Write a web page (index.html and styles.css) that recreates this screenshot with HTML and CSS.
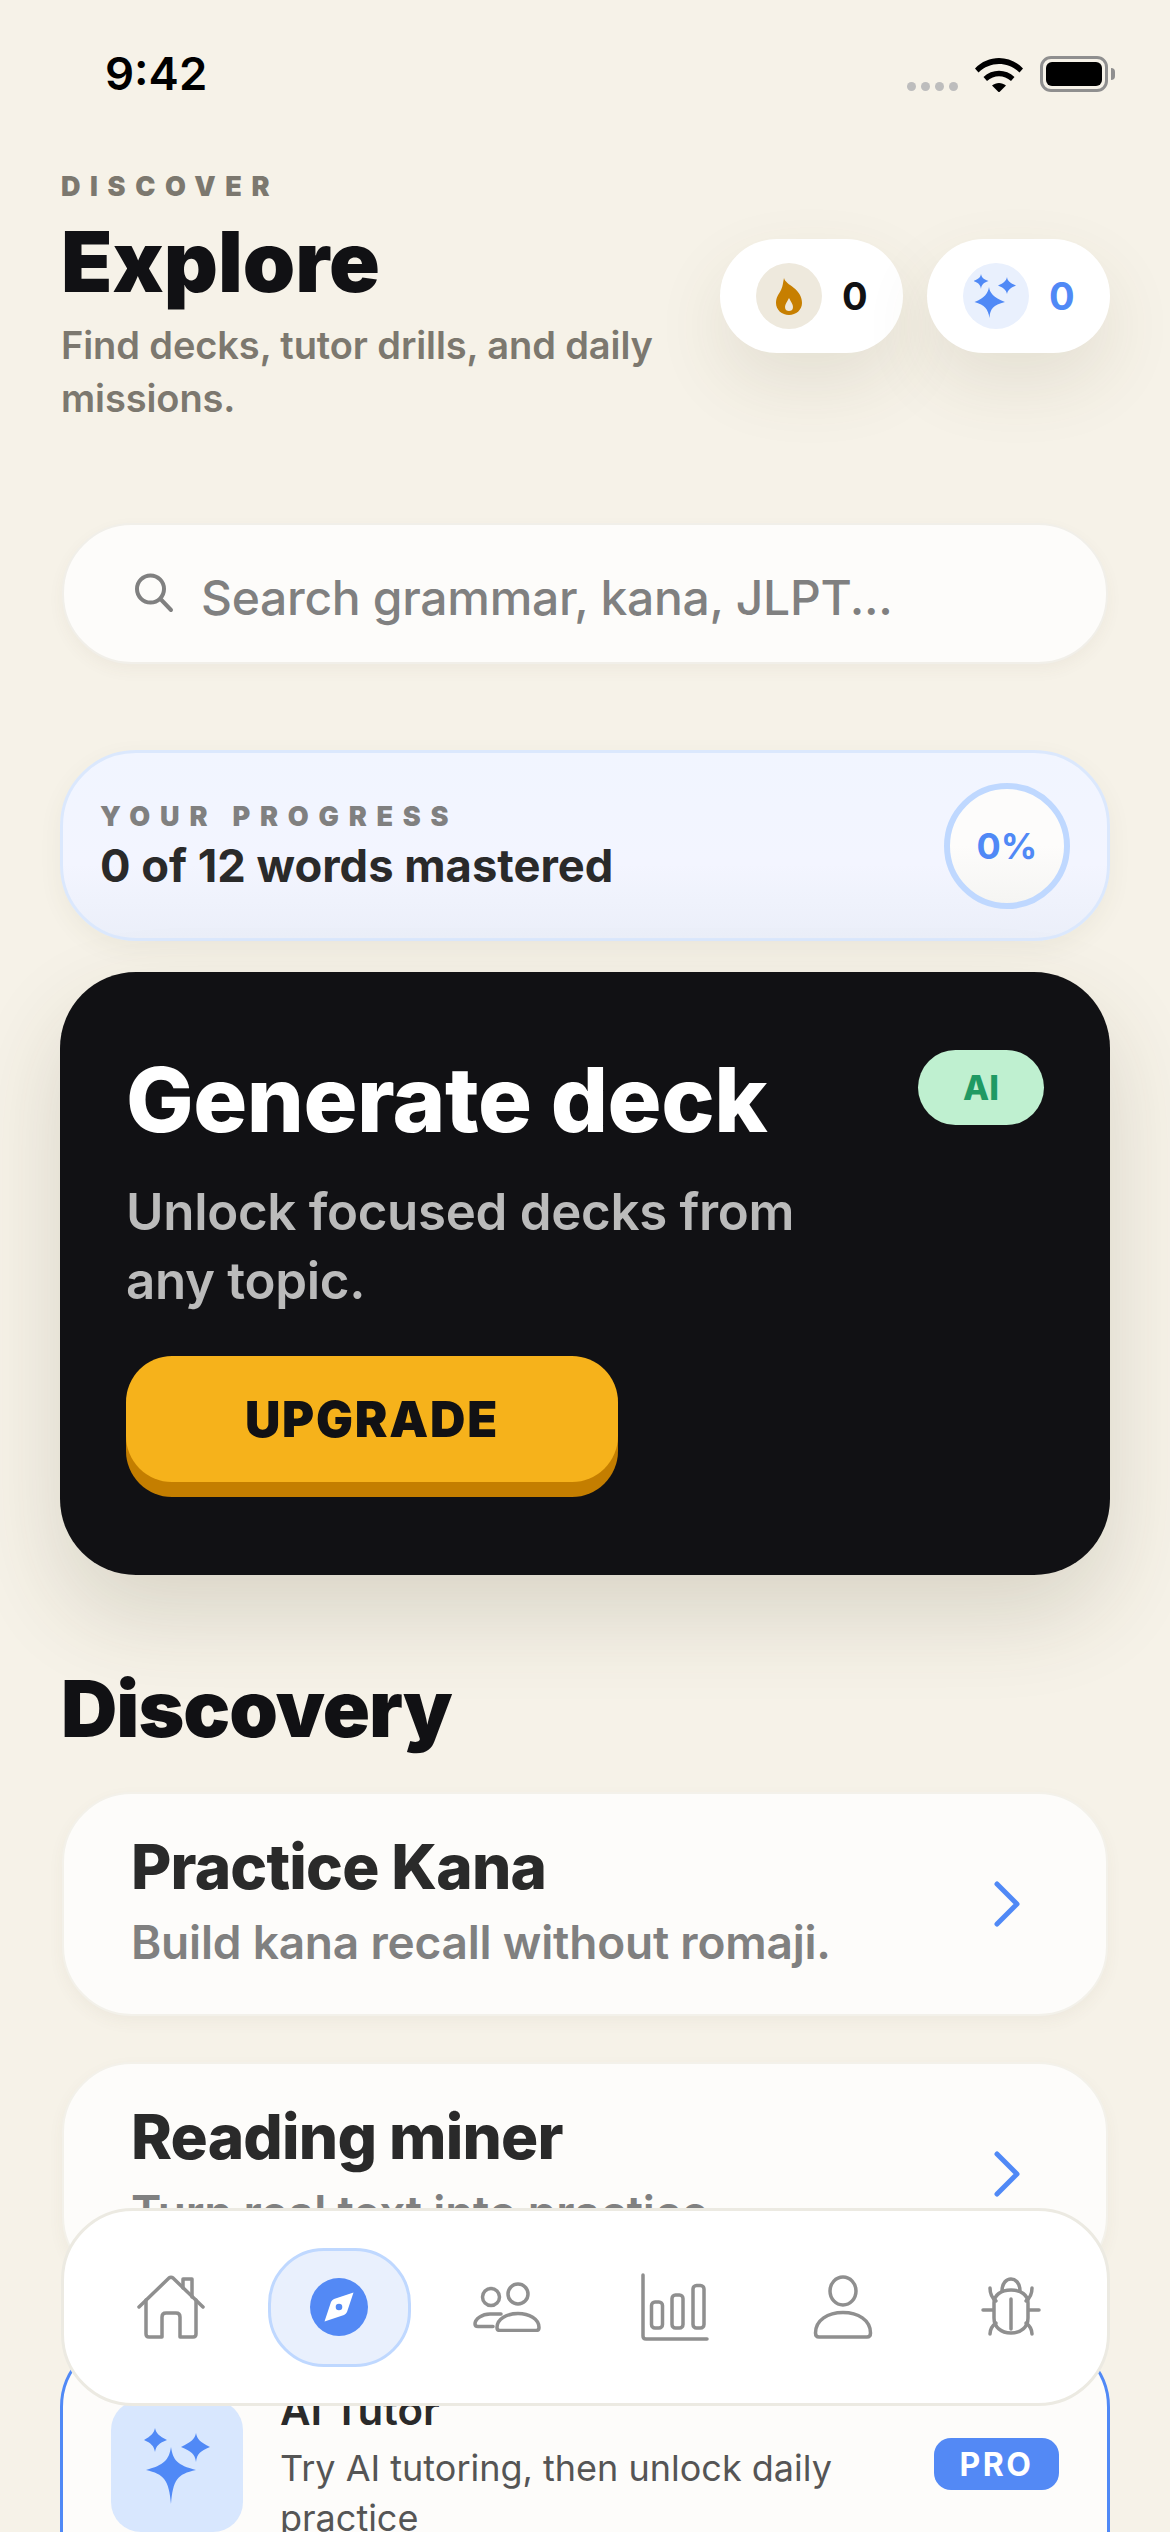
FILE: index.html
```html
<!DOCTYPE html>
<html lang="en">
  <head>
    <meta charset="UTF-8" />
    <meta name="viewport" content="width=device-width, initial-scale=1.0" />
    <title>Explore</title>
    <link rel="stylesheet" href="styles.css">
  </head>

  <body>
    <div class="screen">
      <div class="statusBar">
        <span class="time">9:42</span>
        <div class="statusIcons">
          <div class="signal"><i></i><i></i><i></i><i></i></div>
          <svg class="wifi" width="48" height="36" viewBox="0 0 48 36">
            <path d="M0 12.5C13 -1.5 35 -1.5 48 12.5L44.5 16.5C33 5 15 5 3.500 16.500Z" />
            <path d="M8.500 21C17 12.500 31 12.500 39.500 21L36 25C29 18.500 19 18.500 12 25Z" />
            <path d="M17 29.500C21 26 27 26 31 29.500L24 36.500Z" />
          </svg>
          <div class="battery"><div class="batteryFill"></div></div>
        </div>
      </div>

      <header class="pageHead">
        <div class="headText">
          <p class="eyebrow">DISCOVER</p>
          <h1>Explore</h1>
          <p class="headSub">Find decks, tutor drills, and daily missions.</p>
        </div>
        <div class="stats">
          <div class="statPill">
            <span class="statIcon flameBg">
              <svg width="26" height="37" viewBox="0 0 26 37">
                <path fill="#c77f00" fill-rule="evenodd" d="M8 0C9 4 13 6 18 10C23 14 26 19 26 25C26 32 20 37 13 37C6 37 0 32 0 25C0 19 3 16 5 12C7 8 7 4 8 0ZM13 20C11 24 9 26 9 29C9 32 11 33 13 33C15 33 17 32 17 29C17 26 15 24 13 20Z" />
              </svg>
            </span>
            <b class="statNum">0</b>
          </div>
          <div class="statPill">
            <span class="statIcon sparkBg">
              <svg width="44" height="44" viewBox="0 0 44 44">
                <path fill="#5089f6" d="M15 13C16 19 19 23 31 28C19 31 16 35 15.500 44C14 35 11 31 0.500 28C11 24 14 19 15 13ZM7 0C7.500 3 9 5 14.500 7C9 9 7.500 11 7 15C6.500 11 5 9 -0.500 7C5 5 6.500 3 7 0ZM33 3C33.500 7 36 9 42 11.500C36 14 34 16 33 20C32 16 30 14 24 11.500C30 9 32 7 33 3Z" />
              </svg>
            </span>
            <b class="statNum blue">0</b>
          </div>
        </div>
      </header>

      <div class="searchBox">
        <svg width="40" height="40" viewBox="0 0 40 40" fill="none" stroke="#808080" stroke-width="4" stroke-linecap="round">
          <circle cx="16.500" cy="16" r="13.500" />
          <path d="M26.500 26L37 37" />
        </svg>
        <span>Search grammar, kana, JLPT...</span>
      </div>

      <section class="progressCard">
        <div>
          <p class="progressLabel">YOUR PROGRESS</p>
          <p class="progressText">0 of 12 words mastered</p>
        </div>
        <div class="progressRing">0%</div>
      </section>

      <section class="promoCard">
        <div class="promoTop">
          <h2>Generate deck</h2>
          <span class="aiBadge">AI</span>
        </div>
        <p class="promoText">Unlock focused decks from any topic.</p>
        <button class="upgradeBtn">UPGRADE</button>
      </section>

      <h2 class="sectionTitle">Discovery</h2>

      <div class="discoverCard">
        <div class="discoverText">
          <h3>Practice Kana</h3>
          <p>Build kana recall without romaji.</p>
        </div>
        <svg class="chevron" width="28" height="46" viewBox="0 0 28 46" fill="none" stroke="#5089f6" stroke-width="5" stroke-linecap="round" stroke-linejoin="round">
          <path d="M4 3L24 23L4 43" />
        </svg>
      </div>

      <div class="discoverCard">
        <div class="discoverText">
          <h3>Reading miner</h3>
          <p>Turn real text into practice.</p>
        </div>
        <svg class="chevron" width="28" height="46" viewBox="0 0 28 46" fill="none" stroke="#5089f6" stroke-width="5" stroke-linecap="round" stroke-linejoin="round">
          <path d="M4 3L24 23L4 43" />
        </svg>
      </div>

      <div class="tutorCard">
        <div class="tutorIcon">
          <svg width="66" height="76" viewBox="0 0 66 76">
            <path fill="#5089f6" d="M27 19C29 32 33 37 52 42C33 46 29 52 27 76C25 52 20 46 2 42C20 37 25 32 27 19ZM11 0C12 5 15 8 23 12C15 15 12 18 11 24C10 18 7 15 0 12C7 8 10 5 11 0ZM52 5C53 11 56 14 66 19C56 23 53 26 52 34C51 26 47 23 37 19C47 14 51 11 52 5Z" />
          </svg>
        </div>
        <div class="tutorText">
          <h3>AI Tutor</h3>
          <p>Try AI tutoring, then unlock daily practice</p>
        </div>
        <span class="proBadge">PRO</span>
      </div>

      <nav class="tabBar">
        <div class="tab">
          <svg width="68" height="64" viewBox="0 0 68 64" fill="none" stroke="#8f8f8f" stroke-width="3.500" stroke-linecap="round" stroke-linejoin="round">
            <path d="M2 32L32 3Q34 1.500 36 3L66 32" />
            <path d="M46 13V4H55V22" />
            <path d="M9 25V59Q9 62 12 62H25V42Q25 38 29 38H39Q43 38 43 42V62H56Q59 62 59 59V25" />
          </svg>
        </div>
        <div class="tab tabActive">
          <span class="compass">
            <svg width="30" height="30" viewBox="0 0 30 30">
              <path fill="#fff" fill-rule="evenodd" d="M29.500 0.500L23 20Q22 22 20 23L0.500 29.500L7 10Q8 8 10 7ZM15 11.700A3.300 3.300 0 1 0 15 18.300A3.300 3.300 0 1 0 15 11.700Z" />
            </svg>
          </span>
        </div>
        <div class="tab">
          <svg width="68" height="50" viewBox="0 0 68 50" fill="none" stroke="#8f8f8f" stroke-width="3.500" stroke-linecap="round" stroke-linejoin="round">
            <circle cx="18" cy="15" r="8.500" />
            <circle cx="45" cy="12" r="10" />
            <path d="M28 32H17C9 32 2 37 2 42Q2 44.500 5 44.500H20" />
            <path d="M27 48.500H63Q66 48.500 66 45.500C66 37 56 31.500 45 31.500C34 31.500 24 37 24 45.500Q24 48.500 27 48.500Z" />
          </svg>
        </div>
        <div class="tab">
          <svg width="68" height="68" viewBox="0 0 68 68" fill="none" stroke="#8f8f8f" stroke-width="3.500" stroke-linecap="round" stroke-linejoin="round">
            <path d="M2 2V63Q2 66 5 66H66" />
            <rect x="10.500" y="29" width="11" height="26" rx="3.500" />
            <rect x="31" y="22" width="11" height="33" rx="3.500" />
            <rect x="52" y="12.500" width="11" height="42.500" rx="3.500" />
          </svg>
        </div>
        <div class="tab">
          <svg width="60" height="64" viewBox="0 0 60 64" fill="none" stroke="#8f8f8f" stroke-width="3.500" stroke-linecap="round" stroke-linejoin="round">
            <ellipse cx="30" cy="16" rx="13" ry="14" />
            <path d="M2.500 58C2.500 45 15 37.500 30 37.500C45 37.500 57.500 45 57.500 58Q57.500 62 54 62H6Q2.500 62 2.500 58Z" />
          </svg>
        </div>
        <div class="tab">
          <svg width="60" height="60" viewBox="0 0 60 60" fill="none" stroke="#8f8f8f" stroke-width="3.500" stroke-linecap="round" stroke-linejoin="round">
            <path d="M13 26C13 18 20 13 30 13C40 13 47 18 47 26V41C47 50 40 56 30 56C20 56 13 50 13 41Z" />
            <path d="M21 14C21 -2 39 -2 39 14" />
            <path d="M30 22V52" />
            <path d="M2 33H12" />
            <path d="M48 33H58" />
            <path d="M9 11C9 17 11 21 15 24" />
            <path d="M51 11C51 17 49 21 45 24" />
            <path d="M9 57C9 52 11 49 15 46" />
            <path d="M51 57C51 52 49 49 45 46" />
          </svg>
        </div>
      </nav>
    </div>
  </body>
</html>
```

FILE: styles.css
```css
* {
  box-sizing: border-box;
  margin: 0;
  padding: 0;
}

body {
  font-family: Inter, "Noto Sans", sans-serif;
  background-color: #f6f2e8;
  color: #111114;
}

.screen {
  position: relative;
  width: 1170px;
  height: 2532px;
  padding: 0 60px;
  overflow: hidden;
}

/* status bar */
.statusBar {
  height: 174px;
  padding: 48px 0 0 45px;
  display: flex;
  justify-content: space-between;
  align-items: flex-start;
}

.time {
  font-size: 45.500px;
  line-height: 52px;
  font-weight: 600;
  color: #000;
}

.statusIcons {
  display: flex;
  align-items: flex-end;
  margin-top: 8px;
}

.signal {
  display: flex;
  gap: 5px;
  margin-right: 17px;
  padding-bottom: 1px;
}

.signal i {
  width: 9px;
  height: 9px;
  border-radius: 50%;
  background-color: #bdbdbd;
}

.wifi {
  fill: #000;
  margin-right: 17px;
}

.battery {
  position: relative;
  width: 68px;
  height: 36px;
  border: 3px solid #8f8f8f;
  border-radius: 11px;
  padding: 3px;
  margin-right: 2px;
}

.battery::after {
  content: "";
  position: absolute;
  right: -10px;
  top: 9px;
  width: 4px;
  height: 12px;
  border-radius: 0 4px 4px 0;
  background-color: #8f8f8f;
}

.batteryFill {
  height: 100%;
  border-radius: 6px;
  background-color: #000;
}

/* header */
.pageHead {
  display: flex;
  justify-content: space-between;
  align-items: flex-start;
  height: 349px;
  padding-left: 1px;
}

.headText {
  width: 640px;
}

.eyebrow {
  font-size: 27px;
  line-height: 26px;
  font-weight: 900;
  letter-spacing: 9.600px;
  color: #7c786f;
}

h1 {
  font-size: 84px;
  line-height: 90px;
  font-weight: 900;
  margin-top: 17px;
}

.headSub {
  font-size: 38px;
  line-height: 53px;
  font-weight: 600;
  letter-spacing: -0.100px;
  color: #7c786f;
  margin-top: 12px;
}

.stats {
  display: flex;
  gap: 24px;
  margin-top: 65px;
}

.statPill {
  width: 183px;
  height: 114px;
  padding-left: 36px;
  display: flex;
  align-items: center;
  gap: 20px;
  border-radius: 57px;
  background-color: #fff;
  box-shadow: 0 30px 70px rgba(90, 80, 50, 0.11);
}

.statIcon {
  width: 66px;
  height: 66px;
  border-radius: 50%;
  display: flex;
  align-items: center;
  justify-content: center;
}

.flameBg {
  background-color: #eee9dd;
}

.sparkBg {
  background-color: #e9f0fd;
}

.statNum {
  font-size: 38px;
  font-weight: 700;
}

.blue {
  color: #5089f6;
}

/* search */
.searchBox {
  height: 141px;
  margin: 0 2px;
  padding: 8px 0 0 70px;
  display: flex;
  align-items: center;
  gap: 27px;
  border: 2px solid #f1efe9;
  border-radius: 70px;
  background-color: #fdfcfa;
  box-shadow: 0 6px 16px rgba(90, 80, 50, 0.05);
  font-size: 48px;
  font-weight: 500;
  letter-spacing: -0.300px;
  color: #808080;
}

.searchBox svg {
  margin-top: -10px;
}

/* progress */
.progressCard {
  height: 191px;
  margin-top: 86px;
  padding: 0 37px;
  display: flex;
  justify-content: space-between;
  align-items: center;
  border: 3px solid #dbe8fd;
  border-radius: 76px;
  background: linear-gradient(180deg, #f1f5ff 0%, #f3f5ff 60%, #ebeff9 100%);
  box-shadow: 0 8px 24px rgba(90, 80, 50, 0.06);
}

.progressLabel {
  font-size: 27px;
  line-height: 32px;
  font-weight: 900;
  letter-spacing: 9.800px;
  color: #808080;
  padding-top: 2px;
}

.progressText {
  font-size: 45.300px;
  line-height: 54px;
  font-weight: 700;
  color: #2a2a2a;
  margin-top: 6px;
}

.progressRing {
  width: 126px;
  height: 126px;
  display: flex;
  align-items: center;
  justify-content: center;
  border: 6px solid #bfd8ff;
  border-radius: 50%;
  background: linear-gradient(180deg, #fdfcfb 50%, #f5f5f3 100%);
  font-size: 36px;
  font-weight: 700;
  color: #5089f6;
}

/* promo */
.promoCard {
  height: 603px;
  margin-top: 31px;
  padding: 78px 66px 0 66px;
  border-radius: 76px;
  background-color: #111114;
  box-shadow: 0 40px 90px rgba(70, 60, 30, 0.16);
}

.promoTop {
  display: flex;
  justify-content: space-between;
  align-items: flex-start;
}

.promoTop h2 {
  font-size: 90px;
  line-height: 100px;
  font-weight: 800;
  letter-spacing: -0.500px;
  color: #fff;
}

.aiBadge {
  width: 126px;
  height: 75px;
  display: flex;
  align-items: center;
  justify-content: center;
  border-radius: 38px;
  background-color: #bff0d0;
  font-size: 34px;
  font-weight: 800;
  color: #1f9a63;
}

.promoText {
  width: 700px;
  font-size: 51px;
  line-height: 69px;
  font-weight: 600;
  letter-spacing: -0.300px;
  color: #bbbbbb;
  margin-top: 27px;
}

.upgradeBtn {
  display: block;
  width: 492px;
  height: 126px;
  margin-top: 41px;
  border: none;
  border-radius: 46px;
  background-color: #f6b21b;
  box-shadow: 0 15px 0 #c47e00;
  font-family: inherit;
  font-size: 49px;
  font-weight: 900;
  letter-spacing: 1.800px;
  color: #111114;
}

/* discovery */
.sectionTitle {
  font-size: 78px;
  line-height: 90px;
  font-weight: 900;
  letter-spacing: -1px;
  margin: 89px 0 0 1px;
}

.discoverCard {
  height: 224px;
  margin: 38px 2px 0 2px;
  padding: 0 85px 0 67px;
  display: flex;
  justify-content: space-between;
  align-items: center;
  border: 2px solid #f3f1ea;
  border-radius: 70px;
  background-color: #fdfcfa;
  box-shadow: 0 6px 16px rgba(90, 80, 50, 0.05);
}

.discoverCard + .discoverCard {
  margin-top: 46px;
}

.discoverText {
  padding-bottom: 9px;
}

.discoverCard h3 {
  font-size: 62px;
  line-height: 70px;
  font-weight: 800;
  letter-spacing: -0.800px;
  color: #2a2a2a;
}

.discoverCard p {
  font-size: 46px;
  line-height: 52px;
  font-weight: 600;
  letter-spacing: -0.200px;
  color: #808080;
  margin-top: 14px;
}

/* tutor card under the tab bar */
.tutorCard {
  height: 300px;
  margin-top: 51px;
  padding: 60px 48px 0 48px;
  display: flex;
  align-items: flex-start;
  border: 3px solid #5089f6;
  border-radius: 70px;
  background-color: #fdfcfa;
}

.tutorIcon {
  width: 132px;
  height: 132px;
  flex-shrink: 0;
  display: flex;
  align-items: center;
  justify-content: center;
  border-radius: 30px;
  background-color: #d8e7fe;
}

.tutorText {
  width: 610px;
  margin-left: 37px;
  margin-top: -15px;
}

.tutorText h3 {
  font-size: 42px;
  line-height: 50px;
  font-weight: 600;
  color: #2a2a2a;
}

.tutorText p {
  font-size: 36px;
  line-height: 50px;
  color: #555;
  margin-top: 8px;
}

.proBadge {
  width: 125px;
  height: 52px;
  margin-top: 38px;
  margin-left: auto;
  display: flex;
  align-items: center;
  justify-content: center;
  border-radius: 17px;
  background-color: #5389f5;
  font-size: 32px;
  font-weight: 700;
  letter-spacing: 2.500px;
  color: #fff;
}

/* tab bar */
.tabBar {
  position: absolute;
  left: 61px;
  top: 2208px;
  width: 1049px;
  height: 198px;
  padding: 0 12px 0 23px;
  display: grid;
  grid-template-columns: repeat(6, 168px);
  align-items: center;
  border: 3px solid #eceae2;
  border-radius: 72px;
  background-color: #fff;
}

.tab {
  display: flex;
  align-items: center;
  justify-content: center;
  height: 119px;
}

.tabActive {
  width: 143px;
  margin: 0 auto;
  border: 3px solid #bfd8ff;
  border-radius: 56px;
  background-color: #e9f0fd;
}

.compass {
  width: 58px;
  height: 58px;
  display: flex;
  align-items: center;
  justify-content: center;
  border-radius: 50%;
  background-color: #5389f5;
}
```
